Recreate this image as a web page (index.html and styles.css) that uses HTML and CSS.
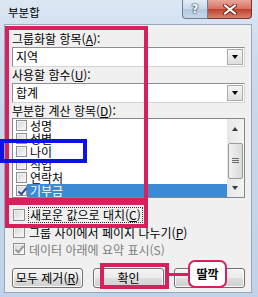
FILE: index.html
```html
<!DOCTYPE html>
<html lang="ko">
<head>
    <meta charset="UTF-8">
    <title>부분합</title>
    <link rel="stylesheet" href="styles.css">
</head>
<body>

<div class="window">
    <!-- Title bar -->
    <div class="title-bar">
        <span class="title">부분합</span>
        <div class="caption-buttons">
            <span class="cap help">?</span>
            <span class="cap close">
                <svg width="14" height="11" viewBox="0 0 14 11">
                    <path d="M2 1.5 L12 9.5 M12 1.5 L2 9.5" stroke="#6b2a20" stroke-width="4" stroke-linecap="round"/>
                    <path d="M2 1.5 L12 9.5 M12 1.5 L2 9.5" stroke="#fff" stroke-width="2.2" stroke-linecap="round"/>
                </svg>
            </span>
        </div>
    </div>

    <!-- Dialog body -->
    <div class="client">
        <div class="field-label">그룹화할 항목(<u>A</u>):</div>
        <div class="combo">
            <span class="combo-text">지역</span>
            <span class="drop"></span>
        </div>

        <div class="field-label">사용할 함수(<u>U</u>):</div>
        <div class="combo">
            <span class="combo-text">합계</span>
            <span class="drop"></span>
        </div>

        <div class="field-label short">부분합 계산 항목(<u>D</u>):</div>
        <div class="listbox">
            <ul class="items">
                <li><span class="chk"></span><span class="item-text">성명</span></li>
                <li><span class="chk"></span><span class="item-text">성별</span></li>
                <li><span class="chk"></span><span class="item-text">나이</span></li>
                <li><span class="chk"></span><span class="item-text">직업</span></li>
                <li><span class="chk"></span><span class="item-text">연락처</span></li>
                <li class="selected"><span class="chk checked"></span><span class="item-text">기부금</span></li>
            </ul>
            <div class="scrollbar">
                <span class="arrow up"></span>
                <span class="thumb"><span class="grip"></span></span>
                <span class="arrow down"></span>
            </div>
        </div>

        <div class="options">
            <div class="option"><span class="chk"></span><span class="focus">새로운 값으로 대치(<u>C</u>)</span></div>
            <div class="option"><span class="chk"></span><span>그룹 사이에서 페이지 나누기(<u>P</u>)</span></div>
            <div class="option disabled"><span class="chk checked"></span><span>데이터 아래에 요약 표시(S)</span></div>
        </div>

        <div class="buttons">
            <span class="btn">모두 제거(<u>R</u>)</span>
            <span class="btn">확인</span>
            <span class="btn">취소</span>
        </div>
    </div>

    <!-- Annotation marks drawn over the dialog -->
    <div class="mark pink fields-mark"></div>
    <div class="mark pink replace-mark"></div>
    <div class="mark blue age-mark"></div>
    <div class="mark pink ok-mark"></div>
    <div class="connector"></div>
    <div class="callout">딸깍</div>
</div>

</body>
</html>
```

FILE: styles.css
```css
/* Reset */
* {
    margin: 0;
    padding: 0;
    box-sizing: border-box;
}

body {
    width: 258px;
    height: 297px;
    overflow: hidden;
    font-family: "Noto Sans CJK KR", "Noto Sans", sans-serif;
    font-size: 12px;
    color: #000;
    background-color: #c4d6ec;
}

u {
    text-decoration: underline;
    text-underline-offset: 1px;
}

/* Window frame */
.window {
    position: relative;
    width: 258px;
    height: 297px;
    padding-left: 4px;
    background: linear-gradient(#dce7f4, #cbdbee 60px, #bfd2e9);
}

.title-bar {
    height: 24px;
    display: flex;
    justify-content: space-between;
}

.title {
    font-size: 11.5px;
    line-height: 12px;
    padding: 6px 0 0 4px;
}

.caption-buttons {
    display: flex;
    height: 19px;
    margin-right: 6px;
}

.cap {
    display: flex;
    align-items: center;
    justify-content: center;
    border: 1px solid #6f7f93;
    border-top: none;
}

.help {
    width: 26px;
    border-radius: 0 0 0 4px;
    background: linear-gradient(#e4ecf6, #c9d8ea 50%, #b3c7e0 51%, #c6d7eb);
    color: #fff;
    font-family: "DejaVu Sans", sans-serif;
    font-weight: bold;
    font-size: 12px;
    text-shadow: 0 0 1px #2d3d55, 0 0 1px #2d3d55, 0 0 2px #2d3d55;
}

.close {
    width: 44px;
    border-left: none;
    border-color: #7a3328;
    border-radius: 0 0 4px 0;
    background: linear-gradient(#eaa79a, #d6705f 50%, #c2402b 51%, #d5836f);
}

/* Dialog client area */
.client {
    width: 248px;
    height: 269px;
    padding: 6px 6px 0 7px;
    background-color: #f0f0f0;
    border: 1px solid #97a8bd;
}

.field-label {
    height: 16px;
    line-height: 16px;
    white-space: nowrap;
}

.field-label.short {
    height: 15px;
    line-height: 15px;
}

/* Drop-down boxes */
.combo {
    height: 20px;
    display: flex;
    justify-content: space-between;
    background-color: #fff;
    border: 1px solid #a6a6a6;
    border-color: #8e8e8e #d4d4d4 #d4d4d4 #8e8e8e;
}

.combo-text {
    line-height: 18px;
    padding-left: 3px;
}

.drop {
    width: 16px;
    height: 16px;
    margin: 1px;
    border: 1px solid #acacac;
    background: linear-gradient(#f6f6f6, #dedede);
    position: relative;
}

.drop::after {
    content: "";
    position: absolute;
    left: 4px;
    top: 5px;
    border-left: 3.5px solid transparent;
    border-right: 3.5px solid transparent;
    border-top: 4px solid #000;
}

/* Field list */
.listbox {
    height: 80px;
    display: flex;
    background-color: #fff;
    border: 1px solid #828790;
}

.items {
    list-style: none;
    flex: 1;
}

.items li {
    height: 13px;
    display: flex;
    align-items: center;
    padding-left: 3px;
}

.item-text {
    flex: 1;
    line-height: 13px;
    padding-left: 3px;
}

.items li .chk {
    width: 11px;
    height: 11px;
}

.items li.selected .item-text {
    background-color: #3c8ad3;
    color: #fff;
}

.scrollbar {
    width: 17px;
    display: flex;
    flex-direction: column;
    align-items: center;
    background: linear-gradient(90deg, #e6e6e6, #f4f4f4);
}

.arrow {
    height: 17px;
    width: 15px;
    position: relative;
}

.arrow::after {
    content: "";
    position: absolute;
    left: 4px;
    border-left: 3.5px solid transparent;
    border-right: 3.5px solid transparent;
}

.arrow.up::after {
    top: 8px;
    border-bottom: 4px solid #3a3a3a;
}

.arrow.down::after {
    top: 6px;
    border-top: 4px solid #3a3a3a;
}

.thumb {
    width: 15px;
    height: 36px;
    margin-top: 7px;
    margin-bottom: auto;
    border: 1px solid #9a9a9a;
    border-radius: 2px;
    background: linear-gradient(90deg, #f2f2f2, #dadada);
    display: flex;
    align-items: center;
    justify-content: center;
}

.grip {
    width: 7px;
    height: 6px;
    background: repeating-linear-gradient(#6a6a6a 0 1px, transparent 1px 2px);
}

/* Checkboxes */
.chk {
    width: 12px;
    height: 12px;
    flex-shrink: 0;
    border: 1px solid #8f8f8f;
    background: linear-gradient(135deg, #d6d6d6, #fafafa);
    box-shadow: inset 0 0 0 1px #f4f4f4;
    position: relative;
}

.chk.checked::after {
    content: "";
    position: absolute;
    left: 3px;
    top: 0;
    width: 3px;
    height: 7px;
    border: solid #2f4f9a;
    border-width: 0 2px 2px 0;
    transform: rotate(40deg);
}

/* Option checkboxes */
.options {
    margin-top: 9px;
    display: flex;
    flex-direction: column;
    gap: 1px;
}

.option {
    height: 16px;
    display: flex;
    align-items: center;
    gap: 4px;
    white-space: nowrap;
}

.option .chk {
    margin-left: 1px;
}

.focus {
    line-height: 14px;
    outline: 1px dotted #333;
    padding: 0 1px;
}

.option.disabled {
    color: #7d7d7d;
}

.option.disabled .chk.checked::after {
    border-color: #9a9a9a;
}

/* Buttons */
.buttons {
    margin-top: 11px;
    display: flex;
    justify-content: space-between;
}

.btn {
    width: 71px;
    height: 20px;
    line-height: 18px;
    text-align: center;
    border: 1px solid #707070;
    border-radius: 3px;
    background: linear-gradient(#f3f3f3, #ebebeb 50%, #dddddd 51%, #cfcfcf);
    box-shadow: inset 0 0 0 1px #fbfbfb;
}

/* Annotation overlays */
.mark {
    position: absolute;
    border: 4px solid;
}

.pink {
    border-color: #d9205c;
}

.blue {
    border-color: #0b12e6;
}

.fields-mark {
    left: 5px;
    top: 26px;
    width: 143px;
    height: 176px;
}

.replace-mark {
    left: 5px;
    top: 201px;
    width: 143px;
    height: 27px;
}

.age-mark {
    left: 0;
    top: 139px;
    width: 87px;
    height: 24px;
}

.ok-mark {
    left: 100px;
    top: 263px;
    width: 69px;
    height: 26px;
}

.connector {
    position: absolute;
    left: 168px;
    top: 273px;
    width: 21px;
    height: 3px;
    background-color: #d9205c;
}

.callout {
    position: absolute;
    left: 188px;
    top: 260px;
    width: 39px;
    height: 28px;
    line-height: 24px;
    text-align: center;
    font-weight: bold;
    background-color: #fff;
    border: 2px solid #d9205c;
    border-radius: 7px;
}
```
